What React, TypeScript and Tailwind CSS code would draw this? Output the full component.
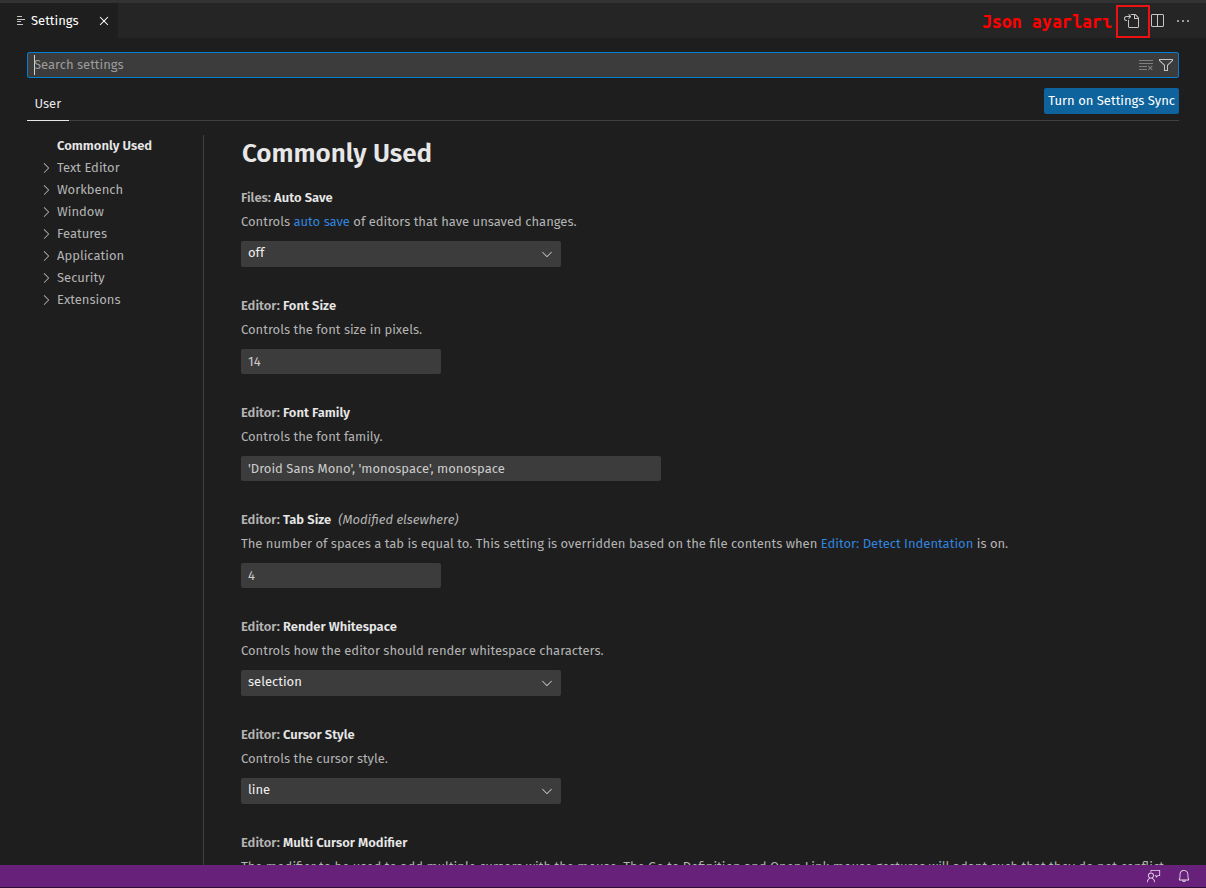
import type { ReactNode } from "react";
import {
  VscBell,
  VscChevronDown,
  VscChevronRight,
  VscClearAll,
  VscClose,
  VscEllipsis,
  VscFeedback,
  VscFilter,
  VscGoToFile,
  VscSplitHorizontal,
} from "react-icons/vsc";

const SECTIONS = ["Text Editor", "Workbench", "Window", "Features", "Application", "Security", "Extensions"];

function TabBar() {
  return (
    <header className="flex h-[35px] shrink-0 bg-[#252526]">
      <div className="flex w-[118px] items-center bg-[#1e1e1e] pl-4 text-white">
        <svg viewBox="0 0 10 10" className="mr-[5px] size-[10px] text-[#c5c5c5]" stroke="currentColor" fill="none">
          <path d="M1 .5h5M1 3.5h8M1 5.5h4M1 8.5h6" />
        </svg>
        <span>Settings</span>
        <VscClose className="ml-[17px] size-4" />
      </div>
      <div className="ml-auto flex items-center text-[#c5c5c5]">
        <span className="mr-[4px] pt-0.5 font-['Ubuntu_Mono','DejaVu_Sans_Mono',monospace] text-[17.9px] leading-none font-bold text-[#ff0000]">
          Json ayarları
        </span>
        <div className="mt-px flex h-[33px] w-[34px] items-center justify-center border-2 border-[#ee1111] pr-1">
          <VscGoToFile className="size-4" />
        </div>
        <VscSplitHorizontal className="-ml-px size-4" />
        <VscEllipsis className="mr-[15px] ml-[10px] size-4" />
      </div>
    </header>
  );
}

function SearchBox() {
  return (
    <div className="flex h-[26px] shrink-0 items-center rounded-xs border border-[#007fd4] bg-[#3c3c3c] pr-[4.5px] pl-1.5">
      <span className="h-5 w-px bg-[#d4d4d4]" />
      <span className="-ml-px grow text-[#9c9c9c]">Search settings</span>
      <VscClearAll className="mr-1 size-4 text-[#7f7f7f]" />
      <VscFilter className="size-4 text-[#c5c5c5]" />
    </div>
  );
}

function Toc() {
  return (
    <nav className="w-[177px] shrink-0 border-r border-[#404040] text-[#b4b4b4]">
      <div className="h-[22px] pl-[30px] leading-[22px] font-semibold text-[#e7e7e7]">Commonly Used</div>
      {SECTIONS.map((name) => (
        <div key={name} className="flex h-[22px] items-center pl-[11px] leading-[22px]">
          <VscChevronRight className="mr-[3px] size-4" />
          {name}
        </div>
      ))}
    </nav>
  );
}

function Setting({ group, name, note, text, children }: { group: string; name: string; note?: string; text: ReactNode; children?: ReactNode }) {
  return (
    <section className="pb-[29px]">
      <h2 className="h-[18px] leading-[18px] font-semibold text-[#b4b4b4]">
        {group}: <span className="text-[#e7e7e7]">{name}</span>
        {note && <span className="ml-[7px] font-normal italic">{note}</span>}
      </h2>
      <p className="mt-[6px] mb-[10px] h-[18px] leading-[18px] whitespace-nowrap text-[#b4b4b4]">{text}</p>
      {children}
    </section>
  );
}

function Select({ value }: { value: string }) {
  return (
    <div className="mb-px flex h-[26px] w-[320px] items-center justify-between rounded-xs bg-[#3c3c3c] pr-[6px] pl-[7px] text-[#f0f0f0]">
      <span className="pb-[3px]">{value}</span>
      <VscChevronDown className="size-4 text-[#c5c5c5]" />
    </div>
  );
}

function NumberBox({ value }: { value: string }) {
  return <div className="mb-px h-[25px] w-[200px] rounded-xs bg-[#3c3c3c] pl-[7px] leading-[25px] text-[#cccccc]">{value}</div>;
}

function TextBox({ value }: { value: string }) {
  return <div className="mb-px h-[25px] w-[420px] rounded-xs bg-[#3c3c3c] pl-[7px] leading-[25px] text-[#cccccc]">{value}</div>;
}

function Link({ children }: { children: ReactNode }) {
  return <span className="text-[#3184df]">{children}</span>;
}

export default function App() {
  return (
    <div className="flex h-[888px] w-[1206px] flex-col overflow-hidden bg-[#1e1e1e] font-['Fira_Sans','Open_Sans',sans-serif] text-[13px] leading-[18px]">
      <div className="h-[3px] shrink-0 bg-[#323233]" />
      <TabBar />
      <div className="flex min-h-0 grow flex-col px-[27px] pt-[14px]">
        <SearchBox />
        <div className="flex h-[43px] shrink-0 justify-between border-b border-[#404040]">
          <div className="-mb-px flex items-center border-b border-[#e7e7e7] px-[7.5px] pt-[10px] text-[#e7e7e7]">User</div>
          <div className="mt-[10px] h-[26px] rounded-xs bg-[#0e639c] px-1 leading-[26px] text-white">Turn on Settings Sync</div>
        </div>
        <div className="flex min-h-0 grow pt-[14px]">
          <Toc />
          <main className="min-w-0 grow overflow-hidden pl-[37px]">
            <h1 className="mb-[17px] h-[37px] pl-px text-[26px] leading-[38px] font-semibold text-[#e7e7e7]">Commonly Used</h1>
            <Setting group="Files" name="Auto Save" text={<>Controls <Link>auto save</Link> of editors that have unsaved changes.</>}>
              <Select value="off" />
            </Setting>
            <Setting group="Editor" name="Font Size" text="Controls the font size in pixels.">
              <NumberBox value="14" />
            </Setting>
            <Setting group="Editor" name="Font Family" text="Controls the font family.">
              <TextBox value="'Droid Sans Mono', 'monospace', monospace" />
            </Setting>
            <Setting
              group="Editor"
              name="Tab Size"
              note="(Modified elsewhere)"
              text={<>The number of spaces a tab is equal to. This setting is overridden based on the file contents when <Link>Editor: Detect Indentation</Link> is on.</>}
            >
              <NumberBox value="4" />
            </Setting>
            <Setting group="Editor" name="Render Whitespace" text="Controls how the editor should render whitespace characters.">
              <Select value="selection" />
            </Setting>
            <Setting group="Editor" name="Cursor Style" text="Controls the cursor style.">
              <Select value="line" />
            </Setting>
            <Setting
              group="Editor"
              name="Multi Cursor Modifier"
              text="The modifier to be used to add multiple cursors with the mouse. The Go to Definition and Open Link mouse gestures will adapt such that they do not conflict"
            />
          </main>
        </div>
      </div>
      <footer className="flex h-[22px] shrink-0 items-center justify-end bg-[#68217a] pr-[15px] text-[#e8dcea]">
        <VscFeedback className="mr-4 size-[14px]" />
        <VscBell className="size-[14px]" />
      </footer>
      <div className="h-px shrink-0 bg-[#2b0f33]" />
    </div>
  );
}
